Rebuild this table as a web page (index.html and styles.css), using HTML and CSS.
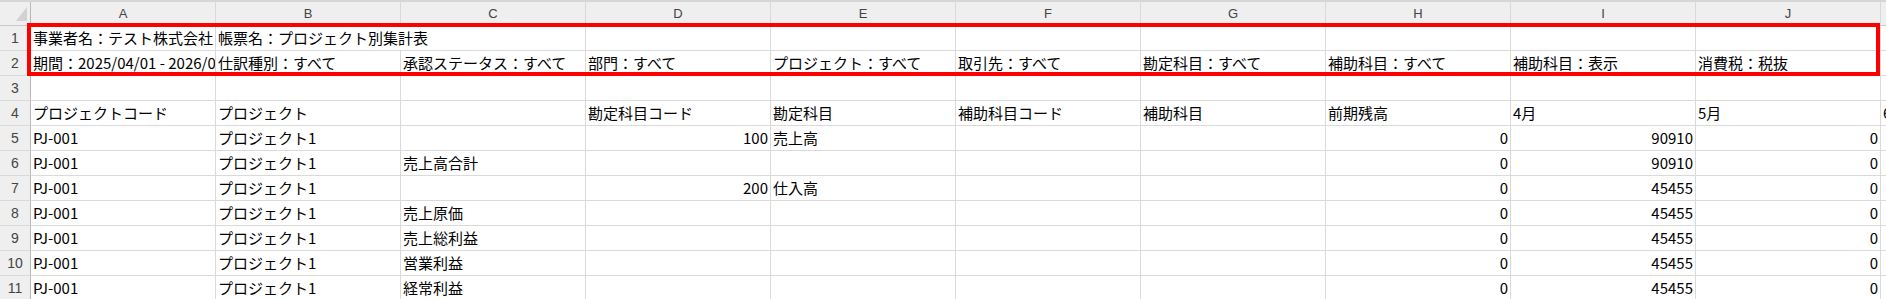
FILE: index.html
```html
<!DOCTYPE html>
<html lang="ja">
<head>
<meta charset="utf-8">
<title>プロジェクト別集計表</title>
<link rel="stylesheet" href="styles.css">
</head>
<body>
<div class="topstrip"></div>
<div class="sheet">
  <div class="c corner"><span class="tri"></span></div>
  <div class="c ch">A</div><div class="c ch">B</div><div class="c ch">C</div><div class="c ch">D</div><div class="c ch">E</div>
  <div class="c ch">F</div><div class="c ch">G</div><div class="c ch">H</div><div class="c ch">I</div><div class="c ch">J</div><div class="c ch">K</div>

  <div class="c rh">1</div>
  <div class="c">事業者名：テスト株式会社</div><div class="c span2">帳票名：プロジェクト別集計表</div>
  <div class="c"></div><div class="c"></div><div class="c"></div><div class="c"></div><div class="c"></div><div class="c"></div><div class="c"></div><div class="c"></div>

  <div class="c rh">2</div>
  <div class="c">期間：2025/04/01 - 2026/03/31</div><div class="c">仕訳種別：すべて</div><div class="c">承認ステータス：すべて</div><div class="c">部門：すべて</div>
  <div class="c">プロジェクト：すべて</div><div class="c">取引先：すべて</div><div class="c">勘定科目：すべて</div><div class="c">補助科目：すべて</div>
  <div class="c">補助科目：表示</div><div class="c">消費税：税抜</div><div class="c"></div>

  <div class="c rh">3</div>
  <div class="c"></div><div class="c"></div><div class="c"></div><div class="c"></div><div class="c"></div><div class="c"></div><div class="c"></div><div class="c"></div><div class="c"></div><div class="c"></div><div class="c"></div>

  <div class="c rh">4</div>
  <div class="c">プロジェクトコード</div><div class="c">プロジェクト</div><div class="c"></div><div class="c">勘定科目コード</div><div class="c">勘定科目</div>
  <div class="c">補助科目コード</div><div class="c">補助科目</div><div class="c">前期残高</div><div class="c">4月</div><div class="c">5月</div><div class="c">6月</div>

  <div class="c rh">5</div>
  <div class="c">PJ-001</div><div class="c">プロジェクト1</div><div class="c"></div><div class="c num">100</div><div class="c">売上高</div>
  <div class="c"></div><div class="c"></div><div class="c num">0</div><div class="c num">90910</div><div class="c num">0</div><div class="c num">0</div>

  <div class="c rh">6</div>
  <div class="c">PJ-001</div><div class="c">プロジェクト1</div><div class="c">売上高合計</div><div class="c"></div><div class="c"></div>
  <div class="c"></div><div class="c"></div><div class="c num">0</div><div class="c num">90910</div><div class="c num">0</div><div class="c num">0</div>

  <div class="c rh">7</div>
  <div class="c">PJ-001</div><div class="c">プロジェクト1</div><div class="c"></div><div class="c num">200</div><div class="c">仕入高</div>
  <div class="c"></div><div class="c"></div><div class="c num">0</div><div class="c num">45455</div><div class="c num">0</div><div class="c num">0</div>

  <div class="c rh">8</div>
  <div class="c">PJ-001</div><div class="c">プロジェクト1</div><div class="c">売上原価</div><div class="c"></div><div class="c"></div>
  <div class="c"></div><div class="c"></div><div class="c num">0</div><div class="c num">45455</div><div class="c num">0</div><div class="c num">0</div>

  <div class="c rh">9</div>
  <div class="c">PJ-001</div><div class="c">プロジェクト1</div><div class="c">売上総利益</div><div class="c"></div><div class="c"></div>
  <div class="c"></div><div class="c"></div><div class="c num">0</div><div class="c num">45455</div><div class="c num">0</div><div class="c num">0</div>

  <div class="c rh">10</div>
  <div class="c">PJ-001</div><div class="c">プロジェクト1</div><div class="c">営業利益</div><div class="c"></div><div class="c"></div>
  <div class="c"></div><div class="c"></div><div class="c num">0</div><div class="c num">45455</div><div class="c num">0</div><div class="c num">0</div>

  <div class="c rh">11</div>
  <div class="c">PJ-001</div><div class="c">プロジェクト1</div><div class="c">経常利益</div><div class="c"></div><div class="c"></div>
  <div class="c"></div><div class="c"></div><div class="c num">0</div><div class="c num">45455</div><div class="c num">0</div><div class="c num">0</div>
</div>
<div class="highlight"></div>
</body>
</html>
```
FILE: styles.css
```css
html, body {
  margin: 0;
  padding: 0;
  overflow: hidden;
  background: #ffffff;
}
body {
  position: relative;
  width: 1886px;
  height: 299px;
  font-family: "Noto Sans CJK JP", "Noto Sans", sans-serif;
  color: #000000;
}
.topstrip {
  height: 2px;
  background: #d6d6d6;
}
.sheet {
  display: grid;
  grid-template-columns: 31px repeat(11, 185px);
  grid-template-rows: 24px repeat(11, 25px);
  width: 2066px;
}
.c {
  box-sizing: border-box;
  border-right: 1px solid #dadada;
  border-bottom: 1px solid #dadada;
  font-size: 15px;
  line-height: 24px;
  padding: 0 2px;
  white-space: nowrap;
  overflow: hidden;
}
.span2 {
  grid-column: span 2;
}
.num {
  text-align: right;
}
.ch {
  background: #efefef;
  border-bottom: 1px solid #c9c9c9;
  border-right: 1px solid #d9d9d9;
  color: #444444;
  font-family: "Liberation Sans", "Noto Sans", sans-serif;
  font-size: 13px;
  line-height: 23px;
  text-align: center;
}
.corner {
  position: relative;
  background: #efefef;
  border-bottom: 1px solid #c9c9c9;
  border-right: 1px solid #b8b8b8;
}
.tri {
  position: absolute;
  right: 3px;
  bottom: 4px;
  width: 0;
  height: 0;
  border-left: 11px solid transparent;
  border-bottom: 14px solid #d2d2d2;
}
.rh {
  background: #efefef;
  border-right: 1px solid #b8b8b8;
  border-bottom: 1px solid #d9d9d9;
  color: #444444;
  font-family: "Liberation Sans", "Noto Sans", sans-serif;
  font-size: 14px;
  text-align: center;
  padding: 0;
}
.highlight {
  position: absolute;
  left: 27px;
  top: 23px;
  width: 1853px;
  height: 53px;
  box-sizing: border-box;
  border: 4px solid #ff0000;
}
```
